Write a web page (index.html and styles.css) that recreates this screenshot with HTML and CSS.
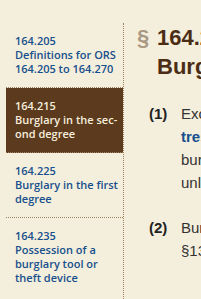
FILE: index.html
```html
<html>
<head>
<title>ORS 164.215</title>
<link rel="stylesheet" href="styles.css">
</head>
<body>
<div class="page">
    <div class="toc">
	<a class="toc_item" href="#">
	    <span class="toc_num">164.205</span>
	    Definitions for ORS 164.205 to 164.270
	</a>
	<a class="toc_item toc_active" href="#">
	    <span class="toc_num">164.215</span>
	    Burglary in the sec&shy;ond degree
	</a>
	<a class="toc_item" href="#">
	    <span class="toc_num">164.225</span>
	    Burglary in the first degree
	</a>
	<a class="toc_item" href="#">
	    <span class="toc_num">164.235</span>
	    Possession of a burglary tool or theft device
	</a>
    </div>
    <div class="statute">
	<h1 class="statute_title">
	    <span class="sect">§</span>
	    <span>164.215<br>Burglary in the second degree</span>
	</h1>
	<div class="para">
	    <span class="para_num">(1)</span>
	    <p>Except as otherwise provided in subsection (2) of this section, a person commits the<br>
	    <a href="#">trespass</a> crime of burglary in the second degree if the person enters or<br>
	    burglary in the second degree if the person enters or remains<br>
	    unlawfully in a building with intent to commit a crime therein.</p>
	</div>
	<div class="para">
	    <span class="para_num">(2)</span>
	    <p>Burglary in the second degree is a Class C felony. [1971 c.743<br>
	    §136; 2019 c.? §?]</p>
	</div>
    </div>
</div>
</body>
</html>
```

FILE: styles.css
```css
html, body {
    overflow: hidden;
}

body {
    margin: 0;
    padding-top: 23px;
    background-color: #F4EEDC;
    font-family: "Liberation Sans", Arial, sans-serif;
    color: #333333;
}

.page {
    display: grid;
    grid-template-columns: 124px 640px;
    min-height: 400px;
}

.toc {
    margin-left: 6px;
    border-right: 1px dotted #A0805E;
    font-family: "Open Sans", sans-serif;
    font-size: 11px;
    font-weight: 600;
    line-height: 14px;
}

.toc_item {
    display: block;
    padding: 11px 0 11px 9px;
    border-bottom: 1px dotted #A0805E;
    color: #17508C;
    text-decoration: none;
}
.toc_item:last-child {
    border-bottom: none;
}
.toc_num {
    display: block;
}
.toc_active {
    background-color: #5B3A1E;
    color: #F6EEDC;
}

.statute {
    padding-left: 13px;
}

.statute_title {
    display: flex;
    margin: 0 0 21px 0;
    font-size: 22px;
    line-height: 29px;
    font-weight: 700;
    color: #4B2D15;
    white-space: nowrap;
}
.sect {
    width: 20px;
    color: #A99883;
}

.para {
    display: flex;
    margin-bottom: 22px;
    font-size: 15px;
    line-height: 23px;
    white-space: nowrap;
}
.para_num {
    width: 32px;
    margin-left: 12px;
    font-weight: 700;
    color: #222222;
}
.para > p {
    margin: 0;
}
.para a {
    color: #17508C;
    font-weight: 700;
    text-decoration: none;
}
```
